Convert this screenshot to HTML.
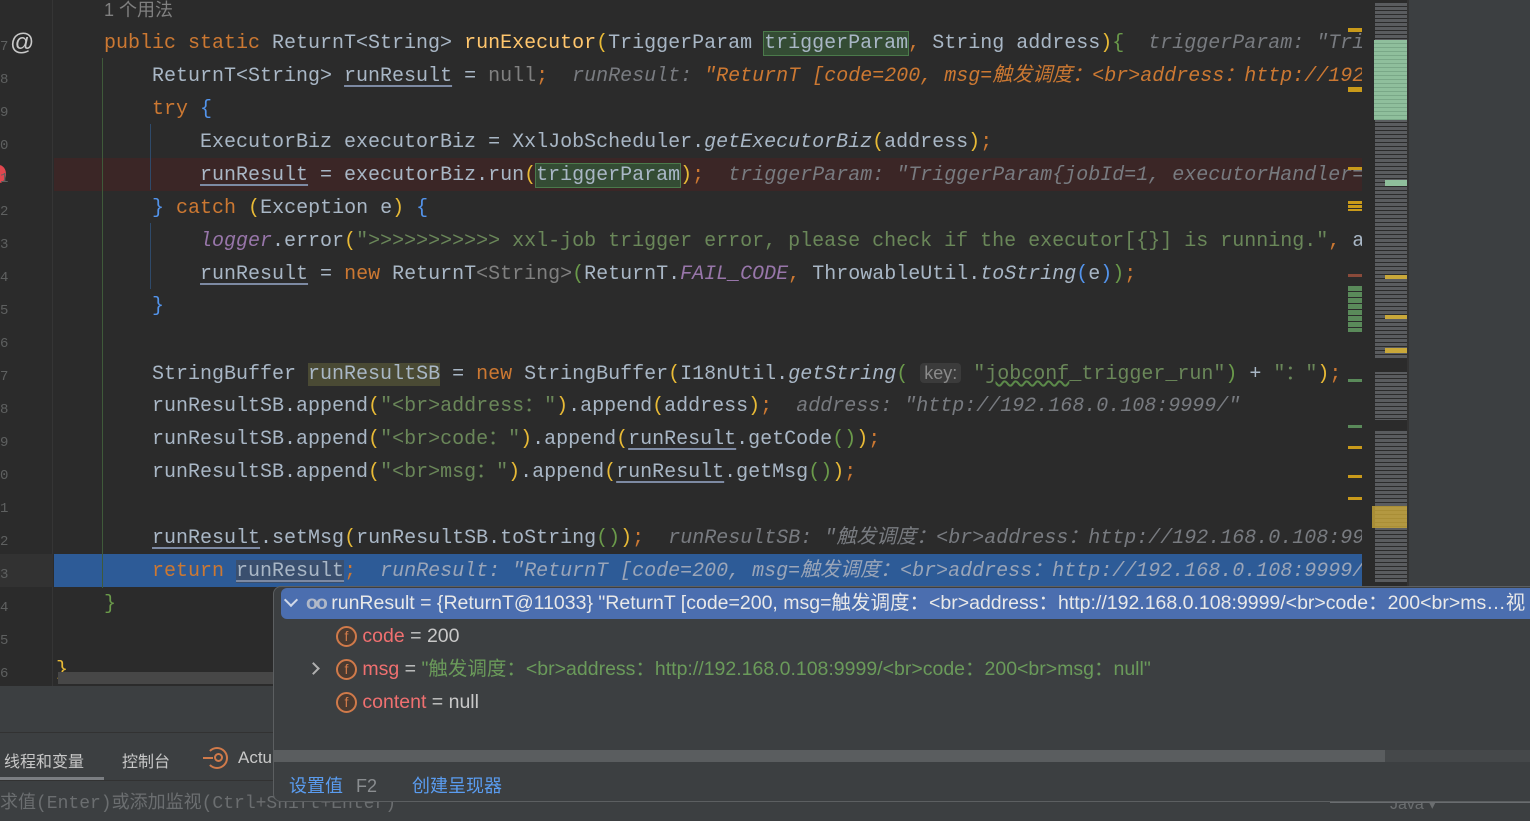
<!DOCTYPE html>
<html><head><meta charset="utf-8"><style>
*{margin:0;padding:0;box-sizing:border-box}
body{width:1530px;height:821px;overflow:hidden;background:#2b2b2b;position:relative;font-family:"Liberation Mono","Noto Sans CJK SC",monospace;font-size:20px;color:#a9b7c6}
.ab{position:absolute}
.ln{position:absolute;left:104px;height:33px;line-height:33px;white-space:pre;}
.k{color:#cc7832}.m{color:#ffc66d}.s{color:#6a8759}.h{color:#787b80;font-style:italic}.ho{color:#cc7832;font-style:italic}
.p{color:#9876aa;font-style:italic}.i{font-style:italic}.y{color:#e8ba36}.b{color:#5394ec}.g{color:#6a9a4a}.gr{color:#808080}
.u{text-decoration:underline;text-decoration-color:#7d8aa3;text-underline-offset:4px}
.sans{font-family:"Liberation Sans","Noto Sans CJK SC",sans-serif}
#clip{position:absolute;left:54px;top:0;width:1308px;height:686px;overflow:hidden}
#clip .ln{left:50px}
.fi{display:inline-block;width:21px;height:21px;border:2px solid #d07a4a;border-radius:50%;background:#4a3a30;color:#d07a4a;font-size:14px;line-height:17px;text-align:center;vertical-align:1px}
</style></head><body>
<!-- gutter -->
<div class="ab" style="left:0;top:0;width:53px;height:686px;background:#2b2b2b;border-right:1px solid #353535"></div>
<div class="ab" style="left:0;top:554px;width:53px;height:33px;background:#323232"></div>
<div class="ab sans" style="left:10px;top:29px;font-size:24px;color:#c8c8c8">@</div>
<div class="ab" style="left:-8px;top:165px;width:14px;height:18px;border-radius:50%;background:#e0474f"></div>
<div class="ab" style="left:0;top:31px;font-size:14px;color:#5e6060;line-height:33px;white-space:pre">7
8
9
0
1
2
3
4
5
6
7
8
9
0
1
2
3
4
5
6</div>
<div id="clip">
<div class="ab" style="left:0;top:158px;width:1308px;height:33px;background:#3b2626"></div>
<div class="ab" style="left:0;top:554px;width:1308px;height:33px;background:#2d5b97"></div>
<div class="ab" style="left:48px;top:58px;width:1px;height:530px;background:#3f5a3a"></div>
<div class="ab" style="left:96px;top:124px;width:1px;height:66px;background:#2f4a6a"></div>
<div class="ab" style="left:96px;top:223px;width:1px;height:66px;background:#2f4a6a"></div>
<div class="ln sans gr" style="top:-6px;font-size:18px">1 个用法</div>
<div class="ln" style="top:27px"><span class="k">public static </span>ReturnT&lt;String&gt; <span class="m">runExecutor</span><span class="y">(</span>TriggerParam <span style="background:#344c34;outline:1px solid #4b7a4b">triggerParam</span><span class="k">, </span>String address<span class="y">)</span><span class="g">{</span>  <span class="h">triggerParam: "TriggerParam{jobId=1</span></div>
<div class="ln" style="top:60px">    ReturnT&lt;String&gt; <span class="u">runResult</span> = <span class="gr">null</span><span class="k">;</span>  <span class="h">runResult: </span><span class="ho">"ReturnT [code=200, msg=触发调度：&lt;br&gt;address：http://192.168</span></div>
<div class="ln" style="top:93px">    <span class="k">try </span><span class="b">{</span></div>
<div class="ln" style="top:126px">        ExecutorBiz executorBiz = XxlJobScheduler.<span class="i">getExecutorBiz</span><span class="y">(</span>address<span class="y">)</span><span class="k">;</span></div>
<div class="ln" style="top:159px">        <span class="u">runResult</span> = executorBiz.run<span class="y">(</span><span style="background:#344c34;outline:1px solid #4b7a4b">triggerParam</span><span class="y">)</span><span class="k">;</span>  <span class="h">triggerParam: "TriggerParam{jobId=1, executorHandler='demo'</span></div>
<div class="ln" style="top:192px">    <span class="b">}</span><span class="k"> catch </span><span class="y">(</span>Exception e<span class="y">)</span> <span class="b">{</span></div>
<div class="ln" style="top:225px">        <span class="p">logger</span>.error<span class="y">(</span><span class="s">"&gt;&gt;&gt;&gt;&gt;&gt;&gt;&gt;&gt;&gt;&gt; xxl-job trigger error, please check if the executor[{}] is running."</span><span class="k">, </span>address</div>
<div class="ln" style="top:258px">        <span class="u">runResult</span> = <span class="k">new </span>ReturnT<span class="gr">&lt;String&gt;</span><span class="g">(</span>ReturnT.<span class="p">FAIL_CODE</span><span class="k">, </span>ThrowableUtil.<span class="i">toString</span><span class="b">(</span>e<span class="b">)</span><span class="g">)</span><span class="k">;</span></div>
<div class="ln" style="top:290px">    <span class="b">}</span></div>
<div class="ln" style="top:357px">    StringBuffer <span style="background:#4a4a34">runResultSB</span> = <span class="k">new </span>StringBuffer<span class="y">(</span>I18nUtil.<span class="i">getString</span><span class="g">(</span> <span class="sans" style="background:#3b3b3b;color:#8a8a8a;font-size:18px;border-radius:4px;padding:0 4px">key:</span> <span class="s">"<span style="text-decoration:underline wavy #5c8a4a">jobconf</span>_trigger_run"</span><span class="g">)</span> + <span class="s">"："</span><span class="y">)</span><span class="k">;</span></div>
<div class="ln" style="top:390px">    runResultSB.append<span class="y">(</span><span class="s">"&lt;br&gt;address："</span><span class="y">)</span>.append<span class="y">(</span>address<span class="y">)</span><span class="k">;</span>  <span class="h">address: "http://192.168.0.108:9999/"</span></div>
<div class="ln" style="top:423px">    runResultSB.append<span class="y">(</span><span class="s">"&lt;br&gt;code："</span><span class="y">)</span>.append<span class="y">(</span><span class="u">runResult</span>.getCode<span class="g">()</span><span class="y">)</span><span class="k">;</span></div>
<div class="ln" style="top:456px">    runResultSB.append<span class="y">(</span><span class="s">"&lt;br&gt;msg："</span><span class="y">)</span>.append<span class="y">(</span><span class="u">runResult</span>.getMsg<span class="g">()</span><span class="y">)</span><span class="k">;</span></div>
<div class="ln" style="top:522px">    <span class="u">runResult</span>.setMsg<span class="y">(</span>runResultSB.toString<span class="g">()</span><span class="y">)</span><span class="k">;</span>  <span class="h">runResultSB: "触发调度：&lt;br&gt;address：http://192.168.0.108:9999/</span></div>
<div class="ln" style="top:555px">    <span class="k">return </span><span class="u" style="background:#3a4f6e">runResult</span><span class="k">;</span>  <span class="h" style="color:#9aa5b8">runResult: "ReturnT [code=200, msg=触发调度：&lt;br&gt;address：http://192.168.0.108:9999/</span></div>
<div class="ln g" style="top:588px">}</div>
<div class="ln y" style="top:654px;left:2px">}</div>
<div class="ab" style="left:4px;top:672px;width:1300px;height:12px;background:#474747"></div>
</div>
<!-- marker stripe -->
<div class="ab" style="left:1348px;top:28px;width:14px;height:4px;background:#c99a1a"></div>
<div class="ab" style="left:1348px;top:87px;width:14px;height:5px;background:#c99a1a"></div>
<div class="ab" style="left:1348px;top:167px;width:14px;height:3px;background:#c99a1a"></div>
<div class="ab" style="left:1348px;top:201px;width:14px;height:10px;background:repeating-linear-gradient(#c99a1a 0 3px,#2b2b2b 3px 4px)"></div>
<div class="ab" style="left:1348px;top:274px;width:14px;height:3px;background:#8a4a3a"></div>
<div class="ab" style="left:1348px;top:286px;width:14px;height:46px;background:repeating-linear-gradient(#5a8a5a 0 5px,#2b2b2b 5px 6px)"></div>
<div class="ab" style="left:1348px;top:379px;width:14px;height:3px;background:#5a8a5a"></div>
<div class="ab" style="left:1348px;top:425px;width:14px;height:3px;background:#5a8a5a"></div>
<div class="ab" style="left:1348px;top:446px;width:14px;height:3px;background:#c99a1a"></div>
<div class="ab" style="left:1348px;top:475px;width:14px;height:3px;background:#c99a1a"></div>
<div class="ab" style="left:1348px;top:497px;width:14px;height:3px;background:#c99a1a"></div>
<!-- minimap -->
<div class="ab" style="left:1362px;top:0;width:46px;height:586px;background:#2b2b2b"></div>
<div class="ab" style="left:1375px;top:3px;width:32px;height:580px;background:repeating-linear-gradient(#6a6d70 0 3px,#2b2b2b 3px 4px);opacity:.75"></div>
<div class="ab" style="left:1374px;top:40px;width:33px;height:80px;background:repeating-linear-gradient(#8fbf9c 0 3px,#7aa888 3px 4px)"></div>
<div class="ab" style="left:1385px;top:180px;width:22px;height:6px;background:#8fbf9c"></div>
<div class="ab" style="left:1385px;top:275px;width:22px;height:4px;background:#c9a83a"></div>
<div class="ab" style="left:1385px;top:315px;width:22px;height:4px;background:#c9a83a"></div>
<div class="ab" style="left:1385px;top:348px;width:22px;height:5px;background:#c9a83a"></div>
<div class="ab" style="left:1372px;top:506px;width:35px;height:22px;background:#c9a83a;opacity:.8"></div>
<div class="ab" style="left:1362px;top:358px;width:46px;height:14px;background:#2b2b2b"></div>
<div class="ab" style="left:1362px;top:420px;width:46px;height:10px;background:#2b2b2b"></div>
<div class="ab" style="left:1407px;top:0;width:2px;height:586px;background:#333"></div>
<!-- right panel -->
<div class="ab" style="left:1409px;top:0;width:121px;height:586px;background:#3c3f41"></div>
<!-- bottom panel -->
<div class="ab" style="left:0;top:686px;width:1530px;height:135px;background:#3c3f41"></div>
<div class="ab" style="left:0;top:732px;width:1530px;height:1px;background:#323232"></div>
<div class="ab" style="left:0;top:780px;width:1530px;height:1px;background:#323232"></div>
<div class="ab" style="left:0;top:777px;width:104px;height:3px;background:#7b7e82"></div>
<div class="ab sans" style="left:4px;top:748px;font-size:16px;color:#c8c8c8">线程和变量</div>
<div class="ab sans" style="left:122px;top:748px;font-size:16px;color:#c8c8c8">控制台</div>
<div class="ab" style="left:206px;top:747px;width:22px;height:22px;border:2px solid #d07a4a;border-radius:50%;border-left-color:transparent"></div>
<div class="ab" style="left:214px;top:753px;width:9px;height:9px;border:2px solid #d07a4a;border-radius:50%"></div>
<div class="ab" style="left:203px;top:757px;width:10px;height:2px;background:#d07a4a"></div>
<div class="ab sans" style="left:238px;top:748px;font-size:17px;color:#c8c8c8">Actu</div>
<div class="ab" style="left:0;top:788px;font-size:18px;color:#6b6e70;white-space:pre">求值(Enter)或添加监视(Ctrl+Shift+Enter)</div>
<div class="ab sans" style="left:1390px;top:794px;font-size:16px;color:#6b6e70">Java ▾</div>
<div class="ab" style="left:1330px;top:801px;width:200px;height:2px;background:#6a6d70"></div>
<!-- popup -->
<div class="ab" style="left:273px;top:586px;width:1262px;height:216px;background:#3c3f41;border:1px solid #5c5f61;border-radius:8px 0 0 8px"></div>
<div class="ab sans" style="left:281px;top:588px;width:1249px;height:31px;background:#4b6eaf;border-radius:6px 0 0 6px;color:#e8e8e8;font-size:19.5px;line-height:31px;white-space:nowrap;overflow:hidden">
<span style="display:inline-block;width:10px;height:10px;border-left:2px solid #d0d8e8;border-bottom:2px solid #d0d8e8;transform:rotate(-45deg);margin:0 10px 4px 5px"></span><span style="color:#b0b8c8;font-weight:bold;letter-spacing:-2px">oo</span> runResult = {ReturnT@11033} "ReturnT [code=200, msg=触发调度：&lt;br&gt;address：http://192.168.0.108:9999/&lt;br&gt;code：200&lt;br&gt;ms…视</div>
<div class="ab sans" style="left:336px;top:621px;font-size:19.5px;line-height:30px;white-space:nowrap">
<div style="height:33px"><span class="fi">f</span> <span style="color:#f07070">code</span><span style="color:#c8c8c8"> = 200</span></div>
<div style="height:33px"><span class="fi">f</span> <span style="color:#f07070">msg</span><span style="color:#c8c8c8"> = </span><span style="color:#6a9a5a">"触发调度：&lt;br&gt;address：http://192.168.0.108:9999/&lt;br&gt;code：200&lt;br&gt;msg：null"</span></div>
<div style="height:33px"><span class="fi">f</span> <span style="color:#f07070">content</span><span style="color:#c8c8c8"> = null</span></div>
</div>
<div class="ab" style="left:309px;top:664px;width:9px;height:9px;border-right:2px solid #b0b0b0;border-top:2px solid #b0b0b0;transform:rotate(45deg)"></div>
<div class="ab" style="left:274px;top:750px;width:1256px;height:12px;background:#45484a"></div>
<div class="ab" style="left:274px;top:750px;width:1111px;height:12px;background:#5a5d5f"></div>
<div class="ab sans" style="left:289px;top:772px;font-size:18px;color:#5a9cf0">设置值 <span style="color:#8a8d90;margin-left:8px">F2</span><span style="margin-left:35px">创建呈现器</span></div>
</body></html>
